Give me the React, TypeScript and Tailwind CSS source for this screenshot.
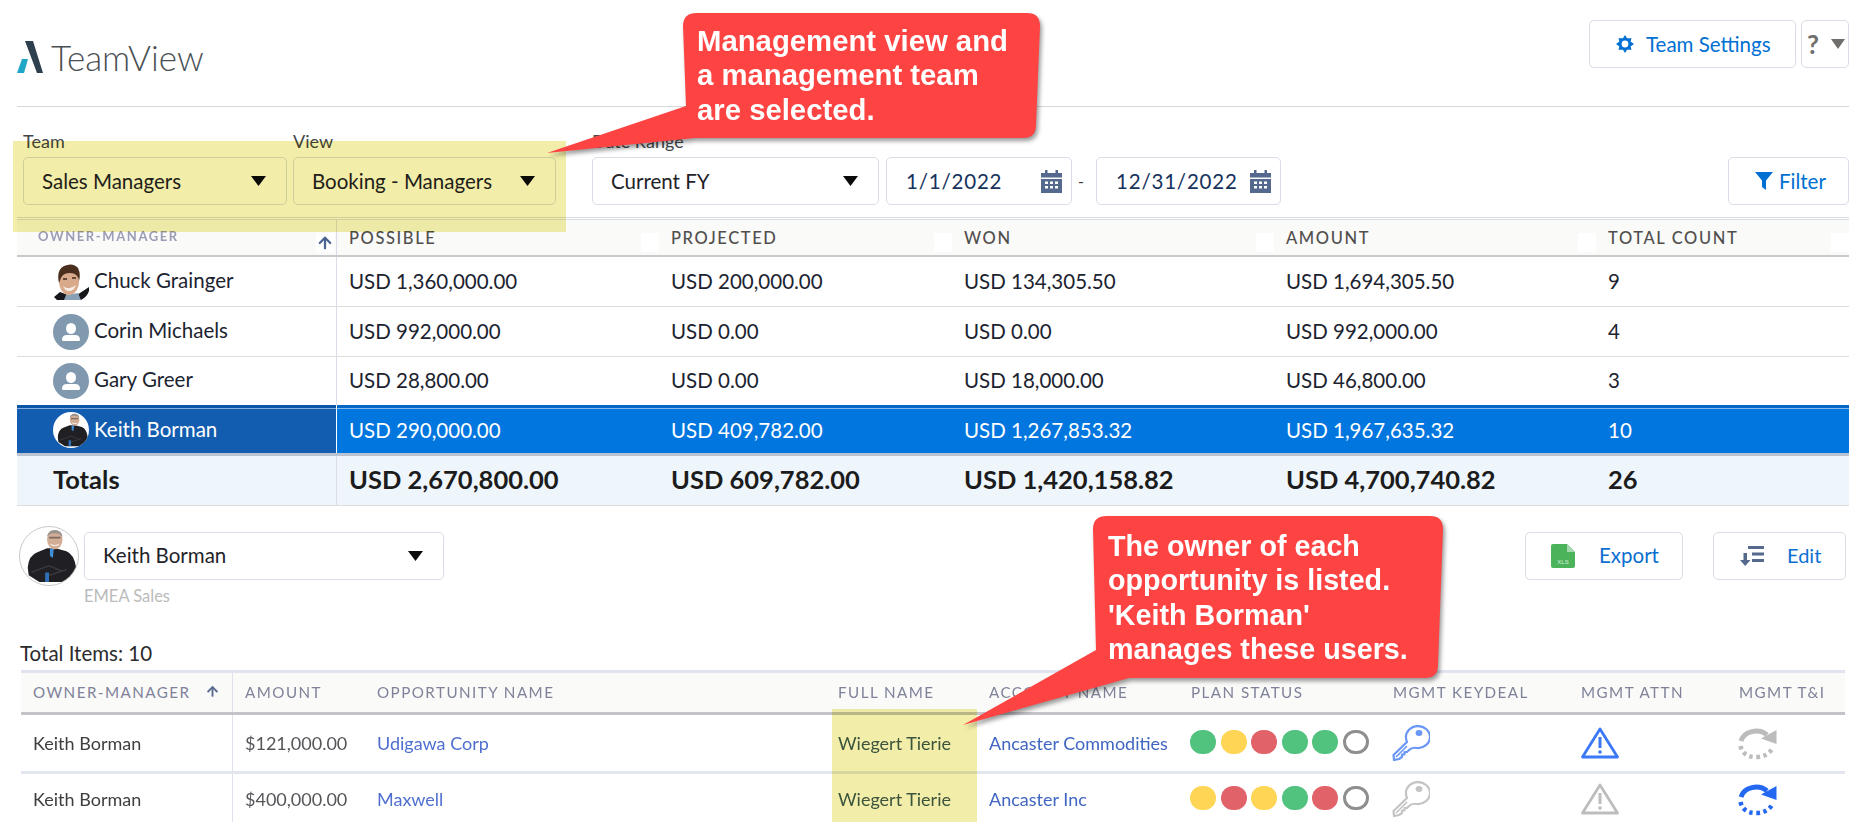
import React from 'react';
import { ArrowUp } from 'lucide-react';

const topCols = 'grid grid-cols-[320px_322px_293px_322px_322px_253px]';
const dealCols = 'grid grid-cols-[212px_132px_461px_151px_202px_202px_188px_158px_117px]';

const Caret = () => (
  <svg width="15" height="10" viewBox="0 0 15 10" className="shrink-0">
    <path d="M0 0H15L7.5 10Z" fill="#0a0a0a" />
  </svg>
);

const Logo = () => (
  <svg width="26" height="32" viewBox="0 0 26 32">
    <path d="M8 0H16L26 32H20Z" fill="#2e3f4d" />
    <path d="M5 18H11L7 32H0Z" fill="#1ea6c7" />
  </svg>
);

const Gear = () => (
  <svg width="18" height="18" viewBox="0 0 18 18">
    <path
      fillRule="evenodd"
      d="M9 0L11 3.2H15.5L14.6 6.6L18 9L14.6 11.4L15.5 14.8H11L9 18L7 14.8H2.5L3.4 11.4L0 9L3.4 6.6L2.5 3.2H7ZM9 5.6A3.4 3.4 0 1 0 9 12.4A3.4 3.4 0 1 0 9 5.6Z"
      fill="#0070d2"
    />
  </svg>
);

const CalendarIcon = () => (
  <svg width="21" height="23" viewBox="0 0 21 23" className="shrink-0">
    <path d="M4 0H6.5V3H14.5V0H17V3H21V7.5H0V3H4Z" fill="#54698d" />
    <path
      fillRule="evenodd"
      d="M0 9H21V23H0ZM4 11.5V14H7V11.5ZM9 11.5V14H12V11.5ZM14 11.5V14H17V11.5ZM4 16V18.5H7V16ZM9 16V18.5H12V16ZM14 16V18.5H17V16Z"
      fill="#54698d"
    />
  </svg>
);

const Funnel = () => (
  <svg width="18" height="18" viewBox="0 0 18 18">
    <path d="M0 0H18L11 8.5V18L7 15V8.5Z" fill="#0070d2" />
  </svg>
);

const XlsIcon = () => (
  <svg width="24" height="24" viewBox="0 0 24 24">
    <path d="M2 0H16L24 8V22Q24 24 22 24H2Q0 24 0 22V2Q0 0 2 0Z" fill="#4bb35a" />
    <path d="M16 0L24 8H16Z" fill="#a5d9ad" />
    <text x="12" y="20" textAnchor="middle" fontSize="6" fill="#d8f0dc" fontFamily="Liberation Sans, sans-serif">XLS</text>
  </svg>
);

const SortIcon = () => (
  <svg width="24" height="20" viewBox="0 0 24 20">
    <path d="M8 0H24V3H8ZM12 6.5H24V9.5H12ZM12 13H24V16H12Z" fill="#54698d" />
    <path d="M3.5 7H7V14H10.5L5.2 20L0 14H3.5Z" fill="#54698d" />
  </svg>
);

const DefaultAvatar = () => (
  <div className="flex h-9 w-9 shrink-0 items-center justify-center rounded-full bg-[#8199af]">
    <svg width="22" height="22" viewBox="0 0 22 22">
      <ellipse cx="11" cy="7.5" rx="5" ry="5.5" fill="#fff" />
      <path d="M2 19Q2 14 7 14H15Q20 14 20 19Q20 20 18.5 20H3.5Q2 20 2 19Z" fill="#fff" />
    </svg>
  </div>
);

const KeithPhoto = ({ className }: { className: string }) => (
  <div className={`shrink-0 overflow-hidden rounded-full bg-white ${className}`}>
    <svg viewBox="0 0 60 60" className="h-full w-full">
      <path d="M8 42Q9 29 18 26L28 22H37L48 25Q56 28 58 42L56 50L44 57H20L9 50Z" fill="#1f1f24" />
      <path d="M31 22L35 22L34 32L31 30Z" fill="#3f8fd6" />
      <path d="M12 47L30 40L44 46M48 44L30 50" stroke="#3a3a40" strokeWidth="1.5" fill="none" />
      <path d="M26 47H30V57H26Z" fill="#2f6fb5" />
      <ellipse cx="36" cy="13" rx="8" ry="10" fill="#d2ad96" />
      <path d="M28 10Q29 3 36 3Q43 3 44 10Q40 6 36 6.5Q31 6 28 10Z" fill="#9a948f" />
      <path d="M30 10H42V12H30Z" fill="#7d6c62" />
      <path d="M31 17Q36 20 41 17L40 19Q36 21 32 19Z" fill="#f2e7df" />
    </svg>
  </div>
);

const ChuckPhoto = () => (
  <div className="h-9 w-9 shrink-0 overflow-hidden bg-white">
    <svg viewBox="0 0 36 36" className="h-full w-full">
      <path d="M4 36L1 33L7 28L15 31H24L36 23V27Q34 33 28 36Z" fill="#15171b" />
      <path d="M13 31L25 29L28 36H11Z" fill="#8aa0b5" />
      <ellipse cx="16" cy="17" rx="10" ry="14" fill="#d9a98c" />
      <path d="M6 19Q3 6 11 2Q20 -2 25 4Q28 10 26 17Q25 9 17 9Q10 9 8 14Z" fill="#4b2f1e" />
      <path d="M10 22Q16 27 23 21Q21 27 16 27Q12 27 10 22Z" fill="#f7eee8" />
      <path d="M10 15H14M19 14H23" stroke="#3f281a" strokeWidth="1.5" />
    </svg>
  </div>
);

const Key = ({ color }: { color: string }) => (
  <svg width="38" height="36" viewBox="0 0 38 36" fill="none">
    <path
      d="M14 13A12 11 0 1 1 25 23Q20 22 17 25L15 27H12.5V29.5H10V32L7 34L2 35L1.5 30L15 17Q14 15 14 13Z"
      stroke={color}
      strokeWidth="2.2"
      strokeLinejoin="round"
    />
    <path d="M4 32L15 21" stroke={color} strokeWidth="1.6" />
    <ellipse cx="27" cy="8" rx="3.4" ry="3" fill={color} />
  </svg>
);

const Warn = ({ color }: { color: string }) => (
  <svg width="38" height="32" viewBox="0 0 38 32" fill="none">
    <path d="M19 2L36.5 30H1.5Z" stroke={color} strokeWidth="2.8" strokeLinejoin="round" />
    <path d="M17.5 10H20.5V21H17.5Z" fill={color} />
    <circle cx="19" cy="25" r="1.8" fill={color} />
  </svg>
);

const Redo = ({ color }: { color: string }) => (
  <svg width="39" height="34" viewBox="0 0 39 34" fill="none">
    <path d="M3 15A15.5 13 0 0 1 29 9" stroke={color} strokeWidth="5" />
    <path d="M38.5 4V18L23 12.5Z" fill={color} />
    <path d="M2.5 20Q5 31 18 31Q29 31 34 23" stroke={color} strokeWidth="4.5" strokeDasharray="3.5 3.5" />
  </svg>
);

const HeaderLabel = ({ label, arrow = false, muted = false }: { label: string; arrow?: boolean; muted?: boolean }) => (
  <div className={`flex h-full items-center justify-between ${muted ? 'border-r border-[#d8dde6] pl-[21px] pr-[2px] text-[13px] font-bold tracking-[1.6px] text-[#9a9db5]' : 'pl-3 text-[16.5px] font-medium tracking-[1.6px] text-[#514f4d]'}`}>
    <span className={muted ? 'pb-[1px] blur-[0.4px]' : 'pt-[1px]'}>{label}</span>
    <div className="mt-[10px] flex h-[19px] w-[18px] items-center justify-center bg-white">
      {arrow && <ArrowUp size={18} strokeWidth={3} className="text-[#4a6491]" />}
    </div>
  </div>
);

const Field = ({ label, width, children }: { label: string; width: string; children: React.ReactNode }) => (
  <div className={`shrink-0 ${width}`}>
    <div className="h-[26px] text-[18px] leading-[20px] text-[#444749]">{label}</div>
    {children}
  </div>
);

const boxClass = 'flex h-[48px] items-center justify-between rounded-[5px] border border-[#d8dde6] bg-white';

const SelectBox = ({ value }: { value: string }) => (
  <div className={`${boxClass} pl-[18px] pr-[20px] text-[20.5px] text-[#1f2328]`}>
    <span>{value}</span>
    <Caret />
  </div>
);

const DateBox = ({ value, className }: { value: string; className: string }) => (
  <div className={`${boxClass} shrink-0 pr-[9px] text-[20.5px] tracking-[0.8px] text-[#16325c] ${className}`}>
    <span>{value}</span>
    <CalendarIcon />
  </div>
);

const rows = [
  { name: 'Chuck Grainger', avatar: <ChuckPhoto />, vals: ['USD 1,360,000.00', 'USD 200,000.00', 'USD 134,305.50', 'USD 1,694,305.50', '9'], h: 'h-[50px]' },
  { name: 'Corin Michaels', avatar: <DefaultAvatar />, vals: ['USD 992,000.00', 'USD 0.00', 'USD 0.00', 'USD 992,000.00', '4'], h: 'h-[50px]' },
  { name: 'Gary Greer', avatar: <DefaultAvatar />, vals: ['USD 28,800.00', 'USD 0.00', 'USD 18,000.00', 'USD 46,800.00', '3'], h: 'h-[48px]' },
];

const deals = [
  {
    opp: 'Udigawa Corp',
    account: 'Ancaster Commodities',
    dots: ['bg-[#52c27f]', 'bg-[#fed554]', 'bg-[#e2626a]', 'bg-[#52c27f]', 'bg-[#52c27f]'],
    on: [true, true, false],
    h: 'h-[59px] border-b-[3px] border-[#e3e6ee]',
  },
  {
    opp: 'Maxwell',
    account: 'Ancaster Inc',
    dots: ['bg-[#fed554]', 'bg-[#e2626a]', 'bg-[#fed554]', 'bg-[#52c27f]', 'bg-[#e2626a]'],
    on: [false, false, true],
    h: 'h-[50px]',
  },
];

const Callout = ({ d, className, children }: { d: string; className: string; children: React.ReactNode }) => (
  <>
    <svg width="1862" height="822" viewBox="0 0 1862 822" className="pointer-events-none absolute left-0 top-0 drop-shadow-[2px_3px_2px_rgba(0,0,0,0.4)]">
      <path d={d} fill="#fe4343" />
    </svg>
    <div className={`absolute font-['Liberation_Sans',Arial,sans-serif] font-bold leading-[34.3px] text-white ${className}`}>
      {children}
    </div>
  </>
);

export default function App() {
  return (
    <div className="relative h-[822px] overflow-hidden bg-white font-['Lato','Liberation_Sans',sans-serif]">
      <div className="ml-[17px] w-[1832px]">
        <header className="flex h-[107px] justify-between border-b border-[#d8d8d8] pt-[20px]">
          <div className="flex items-center gap-[8px] self-start pt-[21px]">
            <Logo />
            <span className="text-[35px] font-light leading-[32px] text-[#4a4f54]">TeamView</span>
          </div>
          <div className="flex gap-[5px]">
            <div className={`${boxClass} w-[207px] justify-start gap-[12px] pl-[26px] text-[20.5px] text-[#0070d2]`}>
              <Gear />
              <span>Team Settings</span>
            </div>
            <div className={`${boxClass} w-[48px] gap-[4px] pl-[5px] pr-[3px]`}>
              <span className="text-[26px] font-bold text-[#706e6b]">?</span>
              <svg width="14" height="10" viewBox="0 0 14 10">
                <path d="M0 0H14L7 10Z" fill="#706e6b" />
              </svg>
            </div>
          </div>
        </header>

        <div className="flex h-[110px] pl-[6px] pt-[24px]">
          <Field label="Team" width="w-[264px]">
            <SelectBox value="Sales Managers" />
          </Field>
          <Field label="View" width="ml-[6px] w-[263px]">
            <SelectBox value="Booking - Managers" />
          </Field>
          <Field label="Date Range" width="ml-[36px] w-[287px]">
            <SelectBox value="Current FY" />
          </Field>
          <div className="ml-[7px] flex items-center self-end pb-[12px]">
            <DateBox value="1/1/2022" className="w-[186px] pl-[19px]" />
            <span className="w-[24px] pl-[6px] text-[16px] text-[#333]">-</span>
            <DateBox value="12/31/2022" className="w-[185px] pl-[19px]" />
          </div>
          <div className={`${boxClass} ml-auto mt-[26px] w-[121px] justify-start gap-[6px] pl-[26px] text-[20.5px] text-[#0070d2]`}>
            <Funnel />
            <span>Filter</span>
          </div>
        </div>

        <div className="border-t border-[#d8dde6] pt-[1px]">
          <div className={`${topCols} h-[38px] border-y border-b-2 border-t-[#d8dde6] border-b-[#c9c9c9] bg-[#fafaf9]`}>
            <HeaderLabel label="OWNER-MANAGER" arrow muted />
            <HeaderLabel label="POSSIBLE" />
            <HeaderLabel label="PROJECTED" />
            <HeaderLabel label="WON" />
            <HeaderLabel label="AMOUNT" />
            <HeaderLabel label="TOTAL COUNT" />
          </div>

          {rows.map((row, i) => (
            <div key={row.name} className={`${topCols} ${row.h} ${i < 2 ? 'border-b-[1.5px] border-[#dddddd]' : ''} text-[20.5px] text-[#1c2330]`}>
              <div className="flex items-center gap-[5px] border-r border-[#d8dde6] pl-9">
                {row.avatar}
                <span className="pb-[3px]">{row.name}</span>
              </div>
              {row.vals.map((v, j) => (
                <div key={j} className={`flex items-center pl-3 ${i === 2 ? 'pb-[2px]' : ''}`}>{v}</div>
              ))}
            </div>
          ))}

          <div className={`${topCols} h-[51px] border-b-[3px] border-[#b9c4d0] text-[20.5px] text-white`}>
            <div className="flex items-center gap-[5px] border-r border-white bg-[#135db0] pl-9 pt-[2px] shadow-[inset_0_3px_0_#0b55a6,inset_0_4px_0_#86aedc]">
              <KeithPhoto className="h-9 w-9" />
              <span className="pb-[2px]">Keith Borman</span>
            </div>
            {['USD 290,000.00', 'USD 409,782.00', 'USD 1,267,853.32', 'USD 1,967,635.32', '10'].map(v => (
              <div key={v} className="flex items-center bg-[#0176de] pl-3 pt-[2px] shadow-[inset_0_3px_0_#0168c8,inset_0_4px_0_#86bbee]">{v}</div>
            ))}
          </div>

          <div className={`${topCols} h-[50px] border-b border-[#dddddd] bg-[#eef6fc] pb-[2px] text-[25.5px] font-bold text-[#1c1c1c]`}>
            <div className="-mb-[2px] flex items-center border-r border-[#d8dde6] pb-[2px] pl-9">Totals</div>
            {['USD 2,670,800.00', 'USD 609,782.00', 'USD 1,420,158.82', 'USD 4,700,740.82', '26'].map(v => (
              <div key={v} className="flex items-center pl-3">{v}</div>
            ))}
          </div>
        </div>

        <div className="mt-[20px] flex h-[112px] items-start">
          <KeithPhoto className="ml-[2px] h-[60px] w-[60px] border border-[#c9c9c9]" />
          <div className="ml-[5px] mt-[6px] w-[360px]">
            <div className={`${boxClass} pl-[18px] pr-[20px] text-[20.5px] text-[#1f2328]`}>
              <span className="pb-[2px]">Keith Borman</span>
              <Caret />
            </div>
            <div className="mt-[4px] text-[16.5px] text-[#bbbbbb]">EMEA Sales</div>
          </div>
          <div className={`${boxClass} ml-auto mt-[6px] w-[158px] justify-start gap-[24px] pl-[25px] text-[20.5px] text-[#0b6fd1]`}>
            <XlsIcon />
            <span className="pb-[2px]">Export</span>
          </div>
          <div className={`${boxClass} ml-[30px] mr-[3px] mt-[6px] w-[133px] justify-start gap-[23px] pl-[26px] text-[20px] text-[#0b6fd1]`}>
            <SortIcon />
            <span className="pb-[2px]">Edit</span>
          </div>
        </div>

        <div className="flex h-[32px] items-center pb-[2px] pl-[3px] text-[20.5px] text-[#2b2b2b]">Total Items: 10</div>

        <div className="ml-[4px] w-[1824px] blur-[0.5px]">
          <div className={`${dealCols} h-[45px] border-y-[3px] border-t-[#e1e4ef] border-b-[#c3c3c9] bg-[#fafaf9] text-[15.2px] tracking-[1.45px] text-[#7f8299]`}>
            <div className="flex items-center justify-between border-r border-[#dfe2ea] pl-3 pr-[12px]">
              <span>OWNER-MANAGER</span>
              <ArrowUp size={15} strokeWidth={3} className="mb-[3px] text-[#5a6a90]" />
            </div>
            {['AMOUNT', 'OPPORTUNITY NAME', 'FULL NAME', 'ACCOUNT NAME', 'PLAN STATUS', 'MGMT KEYDEAL', 'MGMT ATTN', 'MGMT T&I'].map(h => (
              <div key={h} className="flex items-center pl-3">{h}</div>
            ))}
          </div>

          {deals.map(deal => (
            <div key={deal.opp} className={`${dealCols} ${deal.h} text-[18px]`}>
              <div className="flex items-center border-r border-[#dfe2ea] pl-3 text-[#3e3e3c]">Keith Borman</div>
              <div className="flex items-center pl-3 text-[#55565a]">{deal.opp === 'Maxwell' ? '$400,000.00' : '$121,000.00'}</div>
              <div className="flex items-center pl-3 text-[#4f6fd0]">{deal.opp}</div>
              <div className="flex items-center pl-3 text-[#3e5a58]">Wiegert Tierie</div>
              <div className="flex items-center pl-3 text-[#3f66c0]">{deal.account}</div>
              <div className="flex items-center gap-[4.5px] pb-[3px] pl-[11px]">
                {deal.dots.map((c, k) => (
                  <span key={k} className={`h-[24px] w-[26px] rounded-full ${c}`} />
                ))}
                <span className="h-[24px] w-[26px] rounded-full border-[3px] border-[#8f8f8f]" />
              </div>
              <div className="flex items-center pl-[11px]"><Key color={deal.on[0] ? '#6a96f5' : '#c4c4c4'} /></div>
              <div className="flex items-center pl-3"><Warn color={deal.on[1] ? '#3b78f7' : '#bdbdbd'} /></div>
              <div className="flex items-center pl-[11px]"><Redo color={deal.on[2] ? '#2468f2' : '#bcbcbc'} /></div>
            </div>
          ))}
        </div>
      </div>

      {/* yellow highlights laid over the page */}
      <div className="absolute left-[13px] top-[141px] h-[91px] w-[553px] bg-[#f2eeaa] mix-blend-multiply" />
      <div className="absolute left-[832px] top-[709px] h-[113px] w-[145px] bg-[#f2eeaa] mix-blend-multiply" />

      <Callout
        d="M697 13H1027Q1040 13 1040 26L1036 125Q1036 138 1023 138H695L547 153L686 106L683 26Q683 13 697 13Z"
        className="left-[697px] top-[24px] w-[340px] text-[29.3px]"
      >
        Management view and<br />a management team<br />are selected.
      </Callout>
      <Callout
        d="M1107 516H1430Q1443 516 1443 529L1438 665Q1438 678 1425 678H1129L963 725L1096 650L1093 529Q1093 516 1107 516Z"
        className="left-[1108px] top-[529px] w-[330px] text-[28.7px]"
      >
        The owner of each<br />opportunity is listed.<br />'Keith Borman'<br />manages these users.
      </Callout>
    </div>
  );
}
